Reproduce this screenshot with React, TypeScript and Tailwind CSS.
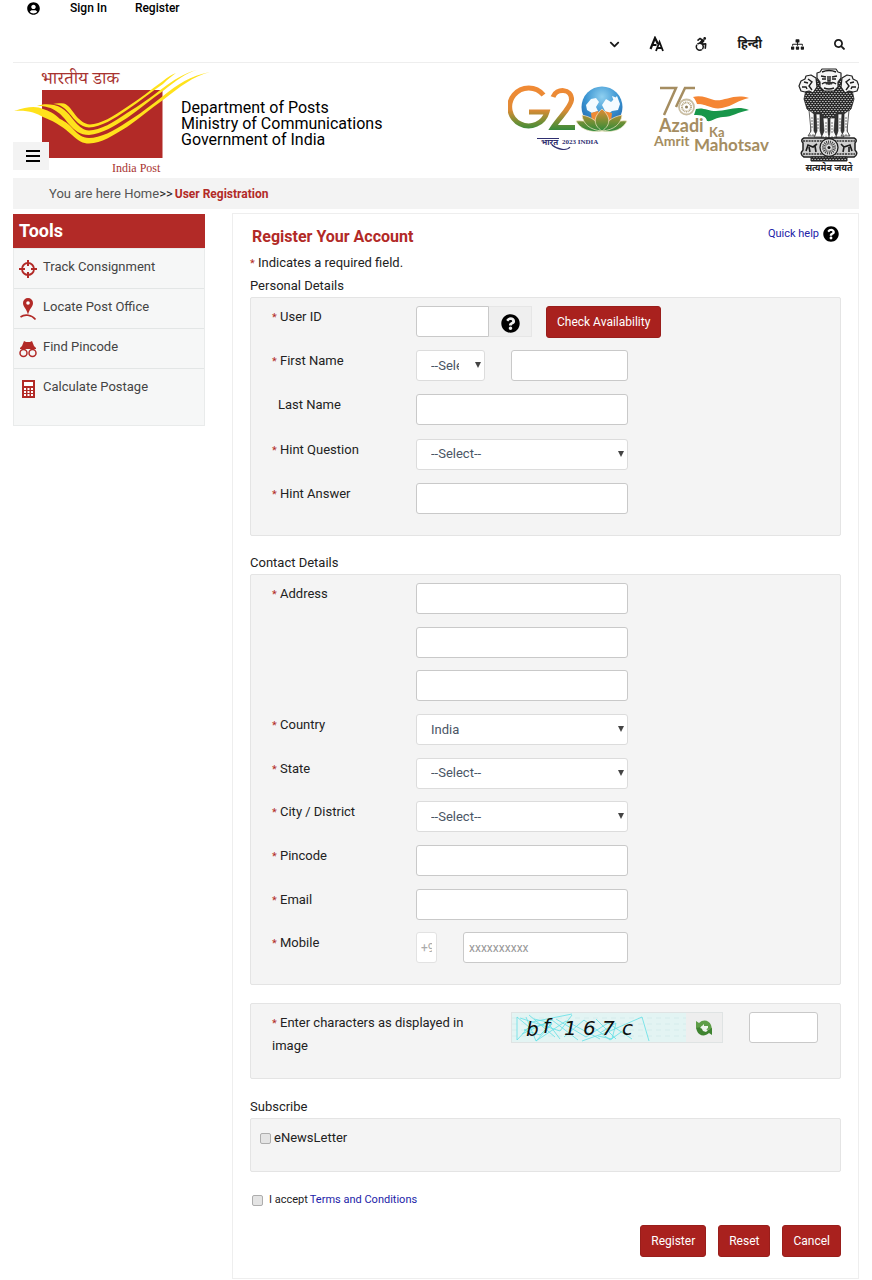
import { useState } from "react"
import type { InputHTMLAttributes, ReactNode } from "react"
import {
  FaAccessibleIcon,
  FaChevronDown,
  FaQuestionCircle,
  FaSearch,
  FaSitemap,
  FaUserCircle,
} from "react-icons/fa"

function IndiaPostLogo() {
  return (
    <svg width="168" height="114" viewBox="13 63 168 114" className="overflow-visible" role="img" aria-label="India Post">
      <rect x="42" y="90" width="120.500" height="68" fill="#b22a27" />
      <g fill="#ffe21c">
        <path d="M14 111 C28 110 36 113 43 117 C58 123 64 128 72 135 C78 141 83 143.500 89 143.500 C102 143 112 136 127 127 C140 118 150 109 163 100 C181 86 192 77 210 72 C190 76 178 84 163 96 C150 106 140 114 127 122 C114 131 100 138 89 138 C82 138 78 134 74 130 C69 124 66 122 60 119 C54 113 49 111 43 109 C37 106 28 106 14 111Z" />
        <path d="M37 106 C46 106 52 108 56 111 C62 115 64 118 68 123 C75 131 80 135 89 135 C102 134 114 126 127 118 C140 109 150 100 163 91 C177 80 186 73 197 70 C184 73 174 80 163 88 C150 98 140 105 127 113 C114 122 100 130.500 89 130.500 C83 130 80 127 76 123 C69 115 66 108 54 105 C48 104 42 104 37 106Z" />
        <path d="M53 104 C60 104 65 108 69 113 C75 120 80 127 89 127.500 C101 127 114 119 127 110 C140 101 150 93 163 84 C168 79 172 76 176 73 C171 75 168 77 163 81 C150 90 140 99 127 107 C114 116 100 124.500 90 124.500 C84 124 80 120 77 117 C72 111 69 105 64 103.500 C60 103 56 103 53 104Z" />
      </g>
      <text x="41" y="84" fontSize="18" fill="#a83330" fontFamily="'Noto Serif Devanagari', 'Noto Sans', serif">भारतीय डाक</text>
      <text x="112" y="172" fontSize="12" fill="#a83330" fontFamily="'Liberation Serif', serif">India Post</text>
    </svg>
  )
}

function G20Logo() {
  return (
    <svg width="120" height="70" viewBox="508 83 120 70" role="img" aria-label="G20 India 2023">
      <defs>
        <linearGradient id="g20" x1="0" y1="88" x2="0" y2="131" gradientUnits="userSpaceOnUse">
          <stop offset="0" stopColor="#f08a35" />
          <stop offset=".5" stopColor="#e08a35" />
          <stop offset=".8" stopColor="#6f8f35" />
          <stop offset="1" stopColor="#2f8a3c" />
        </linearGradient>
        <radialGradient id="globe" cx=".5" cy=".25" r=".8">
          <stop offset="0" stopColor="#8fd0f0" />
          <stop offset=".5" stopColor="#3b95d2" />
          <stop offset="1" stopColor="#1c5fa8" />
        </radialGradient>
      </defs>
      <g fill="none" stroke="url(#g20)" strokeWidth="5">
        <path d="M543.500 95 A19 19 0 1 0 547 112 L529 112" />
        <path d="M553 97 C556 88 572 88 571.500 100 C571 107 560 117 553 127.500 H575" />
      </g>
      <circle cx="602" cy="107" r="20.500" fill="url(#globe)" />
      <path d="M586 105 l5 -6 l5 -1 l3 4 l-3 5 l2 4 l-6 2 l-5 -3z M602 105 l4 -6 l5 3 l6 -6 l3 8 l-2 6 l-6 1 l-5 4 l-3 -6z M612 96 l5 2 l3 6 l-5 1z" fill="#f4fbff" />
      <path d="M591 113 l7 -2 l3 5 l3 -5 l8 2 l-1 9 h-19z" fill="#ef8b36" />
      <g fill="url(#g20)" stroke="#f7e8c8" strokeWidth=".7">
        <path d="M602 131 C590 133 580 129 576 121 C586 120 596 123 602 131Z" />
        <path d="M602 131 C614 133 623 129 627 121 C618 120 608 123 602 131Z" />
        <path d="M602 131 C590 130 583 124 582 115 C592 117 599 122 602 131Z" />
        <path d="M602 131 C614 130 621 124 622 115 C612 117 605 122 602 131Z" />
        <path d="M602 131 C593 125 593 117 602 109 C611 117 611 125 602 131Z" />
      </g>
      <path d="M537 138.500 H559 M552 145 C558 150 567 151 570 147" fill="none" stroke="#2f2f70" strokeWidth="1.200" />
      <text x="541" y="145" fontSize="8" fontWeight="700" fill="#2f2f70" fontFamily="'Noto Sans', sans-serif">भारत</text>
      <text x="562" y="144" fontSize="7" fontWeight="700" fill="#2f2f70" fontFamily="'Liberation Serif', serif">2023 INDIA</text>
    </svg>
  )
}

function AzadiLogo() {
  return (
    <svg width="122" height="72" viewBox="652 82 122 72" role="img" aria-label="Azadi Ka Amrit Mahotsav">
      <path d="M660 88 H676 L664 115 M695 88 H685 L676 107" fill="none" stroke="#a58d61" strokeWidth="2.500" />
      <circle cx="686.500" cy="107" r="7.500" fill="none" stroke="#c9bda2" strokeWidth="1.800" />
      <circle cx="686.500" cy="107" r="4.500" fill="none" stroke="#b7a784" strokeWidth="2" strokeDasharray="1 .6" />
      <circle cx="686.500" cy="107" r="1.500" fill="#8c7b5a" />
      <path d="M693 97 C701 95 707 98 714 100 C724 102 734 93 749 98 C738 100 733 106 722 108 C712 110 708 104 697 104 C696 101 695 99 693 97Z" fill="#f58634" />
      <path d="M697 105 C703 103 708 107 712 109 C716 108 712 115 697 111Z" fill="#fff" />
      <path d="M696 109 C703 107 708 111 716 111 C728 111 736 105 749 110 C738 112 732 117 723 117 C716 117 712 122 707 121 C706 116 702 115 694 115Z" fill="#18964a" />
      <g fill="#a58d61" fontFamily="Lato, sans-serif" fontWeight="700">
        <text x="659" y="132" fontSize="18">Azadi</text>
        <text x="709" y="137" fontSize="13">Ka</text>
        <text x="654" y="146" fontSize="14">Amrit</text>
        <text x="694" y="151" fontSize="17">Mahotsav</text>
      </g>
    </svg>
  )
}

function NationalEmblem() {
  return (
    <svg width="62" height="110" viewBox="797 66 62 110" role="img" aria-label="State Emblem of India">
      <defs>
        <pattern id="mane" width="3" height="4" patternUnits="userSpaceOnUse">
          <rect width="3" height="4" fill="#2b2b2b" />
          <path d="M0 1 q.8 2 1.500 0 M1.500 3 q.8 2 1.500 0" stroke="#d8d8d8" strokeWidth=".8" fill="none" />
        </pattern>
      </defs>
      <g fill="url(#mane)" stroke="#222" strokeWidth=".8" strokeLinejoin="round">
        <path d="M810 79 L806 90 L804 99 L807 109 L813 114 L820 112 L824 118 L829 120 L834 118 L838 112 L845 114 L851 109 L854 99 L852 90 L848 79Z" />
      </g>
      <g fill="#f4f4f4" stroke="#222" strokeWidth="1.200" strokeLinejoin="round">
        <path d="M816 78 L811 75 L806 76 L805 79 L801 81 L799 86 L801 91 L805 92 L809 91 L813 93 L817 87Z" />
        <path d="M842 78 L847 75 L852 76 L853 79 L857 81 L859 86 L857 91 L853 92 L849 91 L845 93 L841 87Z" />
        <path d="M817 73 L820 72 L822 69 H836 L838 72 L841 73 L841 78 L838 82 L838 87 L834 91 H824 L820 87 L820 82 L817 78Z" />
      </g>
      <g fill="none" stroke="#1c1c1c" strokeWidth="1.400">
        <path d="M822 72 q7 -3 14 0 M821 76 l5 1 M837 76 l-5 1 M822 79 h4 M832 79 h4 M828 76 v5 h2 v-5 M822 84 q3.500 -3 7 0 q3.500 -3 7 0 M824 88 q5 2 10 0" />
        <path d="M804 82 l4 1 M802 87 h4 l1 2 M808 79 l4 3 l-3 4 l3 4 M854 82 l-4 1 M856 87 h-4 l-1 2 M850 79 l-4 3 l3 4 l-3 4" />
      </g>
      <path d="M825 82 h8 l-1 2.500 h-6z" fill="#333" />
      <path d="M812 112 L820 112 L829 120 L838 112 L846 112 L848 135 H810Z" fill="#333" />
      <g fill="#f8f8f8" stroke="#222" strokeWidth=".7">
        <path d="M809 110 L814 114 L814 131 L817 136 H808 L811 131Z" />
        <path d="M816 114 L820 114 L820 131 L822 137 H814 L817 131Z" />
        <path d="M823 118 H828 L828 131 L829 138 H821 L824 131Z" />
        <path d="M830 118 H835 L834 131 L837 138 H829 L830 131Z" />
        <path d="M842 114 L838 114 L838 131 L836 137 H844 L841 131Z" />
        <path d="M849 110 L844 114 L844 131 L841 136 H850 L847 131Z" />
      </g>
      <path d="M812 117v12 M818 118v12 M826 122v12 M832 122v12 M840 118v12 M846 117v12 M809 135h7 M822 137h5 M831 137h5 M842 135h7" stroke="#555" strokeWidth=".8" strokeDasharray="2 1" />
      <path d="M804 138 H854 Q858 140 855 143 V150 Q859 154 854 157 H804 Q799 154 803 150 V143 Q800 140 804 138Z" fill="#cfcfcf" stroke="#222" strokeWidth="1.500" />
      <path d="M803 141h52 M803 154h52" stroke="#333" strokeWidth="1.500" strokeDasharray="2 .8" />
      <circle cx="829" cy="147.500" r="9" fill="#ddd" stroke="#1c1c1c" strokeWidth="1.300" />
      <circle cx="829" cy="147.500" r="5" fill="none" stroke="#444" strokeWidth="4" strokeDasharray=".9 .8" />
      <circle cx="829" cy="147.500" r="1.500" fill="#111" />
      <path d="M806 151 l2 -6 l5 2 l4 -3 M809 147 l1 5 M815 146 l1 6 M841 144 l3 3 l6 -2 l2 6 M844 147 l-1 5 M849 147 v5" fill="none" stroke="#1c1c1c" strokeWidth="1.600" />
      <path d="M811 157 H847 V161 H811Z" fill="url(#mane)" stroke="#222" strokeWidth="1" />
      <text x="829" y="171" fontSize="9" fontWeight="700" textAnchor="middle" fill="#222" fontFamily="'Noto Sans', sans-serif">सत्यमेव जयते</text>
    </svg>
  )
}

function TrackIcon() {
  return (
    <svg width="18" height="18" viewBox="0 0 18 18" fill="none" stroke="#b22a27">
      <circle cx="9" cy="9" r="6" strokeWidth="1.800" />
      <path d="M9 0v6M9 12v6M0 9h6M12 9h6" strokeWidth="2" />
    </svg>
  )
}

function LocateIcon() {
  return (
    <svg width="18" height="24" viewBox="0 0 18 24">
      <path d="M9 1a5 5 0 0 1 5 5c0 4-4 6-5 12C8 12 4 10 4 6a5 5 0 0 1 5-5z" fill="#b22a27" />
      <circle cx="9" cy="6" r="1.800" fill="#fff" />
      <path d="M1.500 20c4-3 11-2.500 15 2.500" fill="none" stroke="#b22a27" strokeWidth="1.600" />
    </svg>
  )
}

function FindIcon() {
  return (
    <svg width="18" height="18" viewBox="0 0 18 18">
      <path d="M5 1l2 1h4l2-1 2 5 2 2v1H1V8l2-2z" fill="#b22a27" />
      <circle cx="4.500" cy="13" r="3.500" fill="none" stroke="#b22a27" strokeWidth="1.500" />
      <circle cx="13.500" cy="13" r="3.500" fill="none" stroke="#b22a27" strokeWidth="1.500" />
    </svg>
  )
}

function CalculatorIcon() {
  return (
    <svg width="18" height="20" viewBox="0 0 18 20">
      <path d="M3 1h13v18H3z" fill="#b22a27" />
      <path d="M5 3h9v4H5z" fill="#fff" />
      <path d="M5 10h9M5 13h9M5 16h9" stroke="#fff" strokeWidth="1.800" strokeDasharray="2 1.500" />
    </svg>
  )
}

function TextSizeIcon() {
  return (
    <svg width="16" height="16" viewBox="0 0 16 16" fill="none" stroke="#111">
      <path d="M1.500 13L6 2l3 6M3.500 9h4" strokeWidth="2.200" />
      <path d="M7 15l3.500-9L14 15M8.500 12h4" strokeWidth="1.800" />
    </svg>
  )
}

function CaptchaImage() {
  return (
    <svg width="174" height="29" viewBox="0 0 174 29" role="img" aria-label="Captcha characters">
      <rect width="174" height="29" fill="#e3f4f3" />
      <path d="M0 5h174M0 11h174M0 17h174M0 23h174" stroke="#d5ecec" strokeDasharray="5 4" />
      <g fill="none" stroke="#62e0e6" strokeWidth=".8">
        <path d="M5 27V4l12 10L5 27M17 2l26 22M8 5l40 13 12-16M20 9l40-8M10 21l30-14 26 20M24 28l30-20 34 18" />
        <path d="M44 6l30 18 22-14 24 16M70 28l28-10 32-14 7 24M52 24l20-17 26 20 14-10M84 6l20 20M14 4l10 24 16-17" />
        <path d="M22 6l18 4-12 12-16-5 24-7 12 16M88 20l16-10-4 16-14-3" />
      </g>
      <g fontFamily="'DejaVu Sans', sans-serif" fontStyle="italic" fontSize="20" fill="#0d0d0d">
        <text x="14" y="23">b</text>
        <text x="31" y="20">f</text>
        <text x="52" y="22">1</text>
        <text x="71" y="22">6</text>
        <text x="90" y="22">7</text>
        <text x="110" y="22">c</text>
      </g>
    </svg>
  )
}

function RefreshIcon() {
  return (
    <svg width="18" height="16" viewBox="0 0 18 16">
      <path d="M1 8V1l3 2c4-4 10-3 12 2l1 4-5 1-2-3-3-1-2 2z" fill="#5f9e48" />
      <path d="M17 8v7l-3-2c-4 4-10 3-12-2L1 8l5-1 2 4 3 1 2-2z" fill="#3f8330" />
      <path d="M5 8l4-4v2h4v2l-4 3V9z" fill="#f0f6ee" />
    </svg>
  )
}

const box = "h-[31px] rounded-[3px] border bg-white text-gray-600 outline-none"

function TextInput({ className = "w-[212px]", ...props }: InputHTMLAttributes<HTMLInputElement>) {
  return <input type="text" className={`${box} border-[#c9c9c9] px-[5px] text-xs placeholder:text-[#999] ${className}`} {...props} />
}

function Select({ id, options, label, className = "w-[212px]" }: { id: string; options: string[]; label?: string; className?: string }) {
  return (
    <div className={`relative h-[31px] ${className}`}>
      <select id={id} aria-label={label} className={`${box} w-full appearance-none border-[#dcdcdc] pl-[14px] pr-[25px] text-[13px]`}>
        {options.map((o) => (
          <option key={o}>{o}</option>
        ))}
      </select>
      <svg width="6" height="6" viewBox="0 0 6 6" className="pointer-events-none absolute right-1 top-3 fill-[#444]">
        <path d="M0 0h6L3 6z" />
      </svg>
    </div>
  )
}

function Star() {
  return <span className="inline-block w-2 text-[11px] text-[#b22a27]">*</span>
}

function Row({ id, label, required = true, children }: { id: string; label: string; required?: boolean; children?: ReactNode }) {
  return (
    <div className="flex min-h-[43px] items-start">
      <label htmlFor={id} className={required ? "w-36 shrink-0" : "w-36 shrink-0 pl-1.5"}>
        {required && <Star />}
        {label}
      </label>
      {children}
    </div>
  )
}

const panel = "rounded-xs border border-[#e4e4e4] bg-[#f4f4f4]"
const button = "h-8 rounded-[3px] border border-[#991e1b] bg-[#a9211e] px-2.5 text-xs text-white"

const tools = [
  { name: "Track Consignment", icon: <TrackIcon /> },
  { name: "Locate Post Office", icon: <LocateIcon /> },
  { name: "Find Pincode", icon: <FindIcon /> },
  { name: "Calculate Postage", icon: <CalculatorIcon /> },
]

export default function App() {
  const [newsletter, setNewsletter] = useState(false)
  const [accepted, setAccepted] = useState(false)
  const checkbox = "appearance-none rounded-[2px] border border-[#adadad] bg-[#e4e4e4] checked:bg-[#a9211e] size-[11px]"

  return (
    <div className="bg-white px-[13px] font-['Roboto','Noto_Sans',sans-serif] text-[13px] leading-[22px] text-[#222]">
      <nav className="mb-0.5 flex h-4 items-center pl-3.5 text-xs font-medium text-black">
        <FaUserCircle size={13} className="mr-[30px]" />
        <a href="#signin" className="mr-7">Sign In</a>
        <a href="#register">Register</a>
      </nav>

      <div className="flex h-[45px] items-center justify-end border-b border-[#eee] pr-3.5 pt-2 text-[#1a1a1a]">
        <button aria-label="More" className="mr-[29px]"><FaChevronDown size={11} /></button>
        <button aria-label="Text size" className="mr-[29px]"><TextSizeIcon /></button>
        <button aria-label="Accessibility" className="mr-[29px]"><FaAccessibleIcon size={14} /></button>
        <a href="#hindi" className="mr-[29px] text-xs font-bold">हिन्दी</a>
        <a href="#sitemap" aria-label="Sitemap" className="mr-[30px]"><FaSitemap size={13} /></a>
        <button aria-label="Search"><FaSearch size={11} /></button>
      </div>

      <header className="relative flex h-[115px] items-start">
        <IndiaPostLogo />
        <button aria-label="Menu" className="absolute left-0 top-[79px] flex h-7 w-9 flex-col items-center justify-center gap-[3px] bg-[#f3f3f3] pl-1">
          <span className="h-0.5 w-3.5 bg-black" />
          <span className="h-0.5 w-3.5 bg-black" />
          <span className="h-0.5 w-3.5 bg-black" />
        </button>
        <p className="pt-[37px] text-base leading-4 text-black">
          Department of Posts<br />
          Ministry of Communications<br />
          Government of India
        </p>
        <div className="ml-auto flex items-start">
          <div className="mr-6 pt-5"><G20Logo /></div>
          <div className="mr-[23px] pt-[19px]"><AzadiLogo /></div>
          <div className="pt-[3px]"><NationalEmblem /></div>
        </div>
      </header>

      <div className="flex h-[31px] items-center bg-[#f3f3f3] pl-9 text-[#555]">
        <a href="#home">You are here Home</a>
        <span className="text-[#222]">&gt;&gt;</span>
        <strong className="ml-0.5 text-xs text-[#b22a27]">User Registration</strong>
      </div>

      <div className="mt-1 flex items-start gap-[27px]">
        <aside className="mt-px w-[192px] shrink-0">
          <h2 className="h-[34px] bg-[#b22a27] pl-1.5 text-lg leading-[34px] font-bold text-white">Tools</h2>
          <ul className="border border-[#e9ebeb] bg-[#f6f7f7] pb-4 text-[#444]">
            {tools.map((t, i) => (
              <li key={t.name} className={i < 3 ? "h-10 border-b border-[#e3e6e6]" : "h-10"}>
                <a href="#tool" className="flex h-full items-center gap-1.5 pl-[5px]">
                  {t.icon}
                  <span className="pb-1">{t.name}</span>
                </a>
              </li>
            ))}
          </ul>
        </aside>

        <main className="min-w-0 flex-1 border border-[#eee] px-[17px] pb-[21px] pt-3">
          <form onSubmit={(e) => e.preventDefault()}>
            <div className="mb-1 flex justify-between">
              <h1 className="pl-0.5 text-base leading-[22px] font-bold text-[#b22a27]">Register Your Account</h1>
              <a href="#help" className="flex h-4 items-center gap-1 pr-0.5 text-[11px] text-[#2222a8]">
                Quick help <FaQuestionCircle size={16} className="text-black" />
              </a>
            </div>
            <p><Star />Indicates a required field.</p>

            <h3>Personal Details</h3>
            <section className={`${panel} px-[21px] py-2`}>
              <div className="grid min-h-[221px] auto-rows-fr">
                <Row id="userid" label="User ID">
                  <TextInput id="userid" className="w-[73px] rounded-r-none" />
                  <button type="button" aria-label="User ID help" className="mr-3.5 flex h-[31px] w-[43px] items-center justify-center border border-l-0 border-[#e6e6e6] bg-[#efefef] pt-1">
                    <FaQuestionCircle size={19} className="text-black" />
                  </button>
                  <button type="button" className={button}>Check Availability</button>
                </Row>
                <Row id="firstname" label="First Name">
                  <Select id="title" label="Title" options={["--Select--", "Mr.", "Ms."]} className="mr-[26px] w-[69px]" />
                  <TextInput id="firstname" className="w-[117px]" />
                </Row>
                <Row id="lastname" label="Last Name" required={false}>
                  <TextInput id="lastname" />
                </Row>
                <Row id="question" label="Hint Question">
                  <Select id="question" options={["--Select--"]} />
                </Row>
                <Row id="answer" label="Hint Answer">
                  <TextInput id="answer" />
                </Row>
              </div>
            </section>

            <h3 className="mt-4">Contact Details</h3>
            <section className={`${panel} px-[21px] py-2`}>
              <div className="grid min-h-[393px] auto-rows-fr">
                <Row id="address1" label="Address">
                  <TextInput id="address1" />
                </Row>
                <div className="pl-36"><TextInput aria-label="Address line 2" /></div>
                <div className="pl-36"><TextInput aria-label="Address line 3" /></div>
                <Row id="country" label="Country">
                  <Select id="country" options={["India"]} />
                </Row>
                <Row id="state" label="State">
                  <Select id="state" options={["--Select--"]} />
                </Row>
                <Row id="city" label="City / District">
                  <Select id="city" options={["--Select--"]} />
                </Row>
                <Row id="pincode" label="Pincode">
                  <TextInput id="pincode" />
                </Row>
                <Row id="email" label="Email">
                  <TextInput id="email" />
                </Row>
                <Row id="mobile" label="Mobile">
                  <input aria-label="Country code" defaultValue="+91" disabled className="mr-[26px] h-[31px] w-[21px] rounded-[3px] border border-[#e2e2e2] bg-white px-1 text-xs text-[#aaa]" />
                  <TextInput id="mobile" placeholder="xxxxxxxxxx" className="w-[165px]" />
                </Row>
              </div>
            </section>

            <section className={`${panel} mt-[18px] flex min-h-[76px] items-start pl-[21px] pr-[22px] pt-2`}>
              <label htmlFor="captcha" className="w-[200px] shrink-0">
                <Star />Enter characters as displayed in image
              </label>
              <div className="ml-[39px] flex h-[31px] border border-[#dfe3e3] bg-[#eee]">
                <CaptchaImage />
                <button type="button" aria-label="Refresh captcha" className="flex w-9 items-center justify-center">
                  <RefreshIcon />
                </button>
              </div>
              <TextInput id="captcha" className="ml-auto w-[69px]" />
            </section>

            <h3 className="mt-[17px]">Subscribe</h3>
            <section className={`${panel} min-h-[54px] pl-[9px] pt-2`}>
              <label className="flex items-center gap-[3px]">
                <input type="checkbox" checked={newsletter} onChange={(e) => setNewsletter(e.target.checked)} className={checkbox} />
                eNewsLetter
              </label>
            </section>

            <div className="mt-[17px] flex items-center pl-0.5 text-[11px]">
              <input id="accept" type="checkbox" checked={accepted} onChange={(e) => setAccepted(e.target.checked)} className={checkbox} />
              <label htmlFor="accept" className="ml-1.5 mr-0.5">I accept</label>
              <a href="#terms" className="text-[#2222a8]">Terms and Conditions</a>
            </div>

            <div className="mt-3.5 flex justify-end gap-3">
              <button type="submit" className={button}>Register</button>
              <button type="reset" className={button}>Reset</button>
              <button type="button" className={button}>Cancel</button>
            </div>
          </form>
        </main>
      </div>
    </div>
  )
}
